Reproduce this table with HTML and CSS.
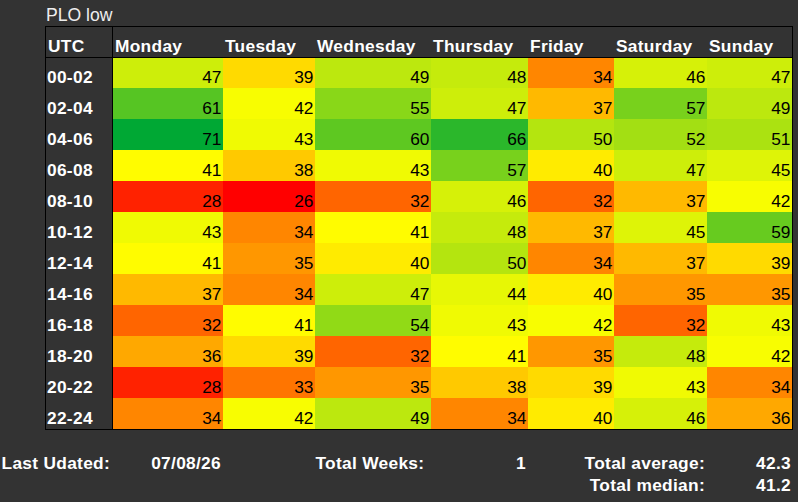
FILE: index.html
```html
<!DOCTYPE html>
<html>
<head>
<meta charset="utf-8">
<title>PLO low</title>
<link rel="stylesheet" href="styles.css">
</head>
<body>
<div class="page">
  <div class="title">PLO low</div>
  <div class="sheet" id="sheet">
    <div class="hd utc">UTC</div>
    <div class="hd">Monday</div>
    <div class="hd">Tuesday</div>
    <div class="hd">Wednesday</div>
    <div class="hd">Thursday</div>
    <div class="hd">Friday</div>
    <div class="hd">Saturday</div>
    <div class="hd">Sunday</div>

    <div class="lbl">00-02</div><div class="cell">47</div><div class="cell">39</div><div class="cell">49</div><div class="cell">48</div><div class="cell">34</div><div class="cell">46</div><div class="cell">47</div>
    <div class="lbl">02-04</div><div class="cell">61</div><div class="cell">42</div><div class="cell">55</div><div class="cell">47</div><div class="cell">37</div><div class="cell">57</div><div class="cell">49</div>
    <div class="lbl">04-06</div><div class="cell">71</div><div class="cell">43</div><div class="cell">60</div><div class="cell">66</div><div class="cell">50</div><div class="cell">52</div><div class="cell">51</div>
    <div class="lbl">06-08</div><div class="cell">41</div><div class="cell">38</div><div class="cell">43</div><div class="cell">57</div><div class="cell">40</div><div class="cell">47</div><div class="cell">45</div>
    <div class="lbl">08-10</div><div class="cell">28</div><div class="cell">26</div><div class="cell">32</div><div class="cell">46</div><div class="cell">32</div><div class="cell">37</div><div class="cell">42</div>
    <div class="lbl">10-12</div><div class="cell">43</div><div class="cell">34</div><div class="cell">41</div><div class="cell">48</div><div class="cell">37</div><div class="cell">45</div><div class="cell">59</div>
    <div class="lbl">12-14</div><div class="cell">41</div><div class="cell">35</div><div class="cell">40</div><div class="cell">50</div><div class="cell">34</div><div class="cell">37</div><div class="cell">39</div>
    <div class="lbl">14-16</div><div class="cell">37</div><div class="cell">34</div><div class="cell">47</div><div class="cell">44</div><div class="cell">40</div><div class="cell">35</div><div class="cell">35</div>
    <div class="lbl">16-18</div><div class="cell">32</div><div class="cell">41</div><div class="cell">54</div><div class="cell">43</div><div class="cell">42</div><div class="cell">32</div><div class="cell">43</div>
    <div class="lbl">18-20</div><div class="cell">36</div><div class="cell">39</div><div class="cell">32</div><div class="cell">41</div><div class="cell">35</div><div class="cell">48</div><div class="cell">42</div>
    <div class="lbl">20-22</div><div class="cell">28</div><div class="cell">33</div><div class="cell">35</div><div class="cell">38</div><div class="cell">39</div><div class="cell">43</div><div class="cell">34</div>
    <div class="lbl">22-24</div><div class="cell">34</div><div class="cell">42</div><div class="cell">49</div><div class="cell">34</div><div class="cell">40</div><div class="cell">46</div><div class="cell">36</div>
  </div>
  <div class="footer">
    <div class="f-label">Last Udated:</div>
    <div class="f-value">07/08/26</div>
    <div class="f-empty"></div>
    <div class="f-label f-weeks">Total Weeks:</div>
    <div class="f-value">1</div>
    <div class="f-label f-right f-span2">Total average:</div>
    <div class="f-value">42.3</div>

    <div class="f-empty f-span5"></div>
    <div class="f-label f-right f-span2">Total median:</div>
    <div class="f-value">41.2</div>
  </div>
</div>
<script src="script.js"></script>
</body>
</html>
```

FILE: styles.css
```css
html, body {
  margin: 0;
  padding: 0;
  background: #333333;
}

.page {
  width: 798px;
  height: 502px;
  font-family: "Liberation Sans", Arial, sans-serif;
  font-size: 17.33px;
  color: #ffffff;
}

.title {
  height: 26px;
  padding-left: 46px;
  display: flex;
  align-items: flex-end;
  color: #eeeeee;
  font-weight: normal;
  font-size: 17.6px;
}

.sheet {
  margin-left: 45px;
  width: 748px;
  box-sizing: border-box;
  border: 1px solid #000000;
  display: grid;
  grid-template-columns: 67px 110px 92px 116px 97px 86px 93px 85px;
  grid-template-rows: 31px 30px repeat(11, 31px);
}

.hd {
  box-sizing: border-box;
  border-bottom: 1px solid #000000;
  font-weight: bold;
  letter-spacing: 0.3px;
  padding-left: 2px;
  display: flex;
  align-items: flex-end;
  white-space: nowrap;
}

.utc {
  border-right: 1px solid #000000;
}

.lbl {
  box-sizing: border-box;
  border-right: 1px solid #000000;
  font-weight: bold;
  letter-spacing: 0.3px;
  padding-left: 1px;
  display: flex;
  align-items: flex-end;
}

.cell {
  color: #000000;
  padding-right: 1.5px;
  display: flex;
  align-items: flex-end;
  justify-content: flex-end;
}

.footer {
  margin-top: 22px;
  display: grid;
  grid-template-columns: 113px 110px 92px 116px 97px 86px 93px 86px;
  grid-auto-rows: 22px;
  font-weight: bold;
  letter-spacing: 0.3px;
}

.f-label,
.f-value,
.f-empty {
  display: flex;
  align-items: flex-end;
  white-space: nowrap;
}

.f-label {
  padding-left: 1.5px;
}

.f-weeks {
  padding-left: 0.5px;
}

.f-right {
  justify-content: flex-end;
  padding-left: 0;
  padding-right: 2px;
}

.f-span2 {
  grid-column: span 2;
}

.f-span5 {
  grid-column: span 5;
}

.f-value {
  justify-content: flex-end;
  padding-right: 2px;
}
```

FILE: script.js
```js
(function () {
  var cells = document.querySelectorAll('#sheet .cell');
  var vals = [];
  cells.forEach(function (c) { vals.push(parseFloat(c.textContent)); });
  var min = Math.min.apply(null, vals);
  var max = Math.max.apply(null, vals);
  var mid = 41.2;
  var lo = [255, 0, 0];
  var md = [255, 255, 0];
  var hi = [0, 168, 52];
  function mix(a, b, t) {
    return [0, 1, 2].map(function (i) { return Math.round(a[i] + (b[i] - a[i]) * t); });
  }
  cells.forEach(function (c, i) {
    var v = vals[i];
    var col;
    if (v <= mid) {
      col = mix(lo, md, (v - min) / (mid - min));
    } else {
      col = mix(md, hi, (v - mid) / (max - mid));
    }
    c.style.background = 'rgb(' + col.join(',') + ')';
  });
})();
```
